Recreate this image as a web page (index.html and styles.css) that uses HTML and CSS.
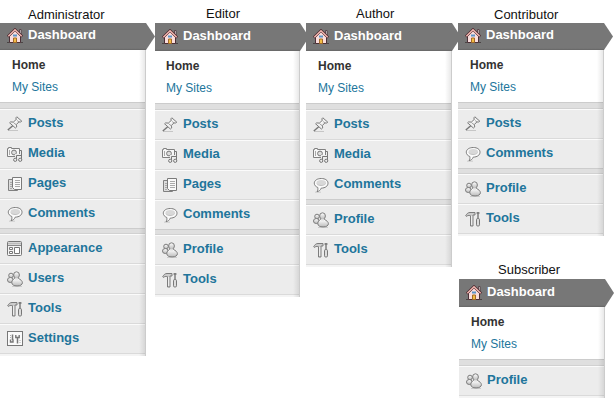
FILE: index.html
```html
<!DOCTYPE html>
<html lang="en">
<head>
<meta charset="utf-8">
<title>Admin menus by role</title>
<link rel="stylesheet" href="styles.css">
</head>
<body>
<svg class="defs" aria-hidden="true">
  <defs>
    <linearGradient id="metal" x1="0" y1="0" x2="0" y2="1"><stop offset="0" stop-color="#fff"/><stop offset="1" stop-color="#bbb"/></linearGradient>
    <symbol id="home" viewBox="0 0 16 16">
      <path d="M0 14.500h16" stroke="#4b4545"/>
      <path d="M2.500 8v6.500h11V8L8 3z" fill="#fbdedd" stroke="#4c3037"/>
      <path d="M12.500 1.500h1.500v5l-1.500-1.500z" fill="#eee" stroke="#4c3037" stroke-width=".8"/>
      <path d="M.8 8.500L8 1.500l7.200 7" fill="none" stroke="#4c2c32" stroke-width="2.600"/>
      <path d="M1.300 8.300L8 1.900l6.700 6.400" fill="none" stroke="#f0b4ae" stroke-width="1.500"/>
      <path d="M6 7.500h4" stroke="#5b95c8" stroke-width="2"/>
      <path d="M6.500 14.500v-4.500h3v4.500z" fill="#f2bd43" stroke="#a36a29"/>
    </symbol>
    <symbol id="posts" viewBox="0 0 16 16">
      <path d="M1 14.500h10" stroke="#c6c6c6"/>
      <path d="M.8 14L6 9.500" stroke="#777" stroke-width="1.500"/>
      <path d="M9.800 .8l5 4.400-1.500.9-1.400-.2-2.500 2.600.3 2.500-1.300 1L2.600 6.800l1-.9 2.700.2 2.900-2.600-.3-1.700z" fill="#f0f0f0" stroke="#7c7c7c"/>
      <path d="M6.500 6.500l3 2.500M9.300 3.700l2.700 2.300" stroke="#999"/>
      <path d="M7.500 6.500l3-2.500" stroke="#fff"/>
    </symbol>
    <symbol id="media" viewBox="0 0 16 16">
      <path d="M.5 2.500h1v-1h3v1h8v8H.5z" fill="#f7f7f7" stroke="#808080"/>
      <circle cx="7" cy="6.500" r="2.400" fill="#ddd" stroke="#777"/>
      <path d="M2.500 4v5" stroke="#aaa"/>
      <path d="M9.500 14V9.500h5V5" fill="none" stroke="#ececec" stroke-width="3"/>
      <path d="M9.500 14V9.500h5M12.500 4.500h2V14" fill="none" stroke="#777"/>
      <circle cx="8.200" cy="13.800" r="1.600" fill="#eee" stroke="#777"/><circle cx="13.200" cy="13.800" r="1.600" fill="#eee" stroke="#777"/>
    </symbol>
    <symbol id="pages" viewBox="0 0 16 16">
      <path d="M1.500 3.500h9v11h-9z" fill="#ddd" stroke="#808080"/>
      <path d="M3 6.500h2M3 8.500h2M3 10.500h2M3 12.500h2" stroke="#aaa"/>
      <path d="M5.500 1.500h9v12h-7l-2-2z" fill="#fafafa" stroke="#7a7a7a"/>
      <path d="M8 4.500h5M8 6.500h5M8 8.500h5M8 10.500h5" stroke="#aaa"/>
    </symbol>
    <symbol id="comments" viewBox="0 0 16 16">
      <path d="M2 15.200h6" stroke="#ccc"/>
      <path d="M8.300 1.500c4 0 6.700 1.900 6.700 4.700s-2.700 4.900-6.700 4.900c-.8 2-2.300 3.300-4.300 3.600.8-1 1.100-2.400.8-4.200C2.600 9.600 1.300 8.100 1.300 6.200c0-2.800 3-4.700 7-4.700z" fill="#fafafa" stroke="#7c7c7c"/>
      <path d="M3.500 6h9.500c-.3 2-2.500 3-5 3s-4.300-1-4.500-3z" fill="#c0c0c0"/>
      <ellipse cx="8.300" cy="5.500" rx="4.700" ry="2.500" fill="#d8d8d8"/>
    </symbol>
    <symbol id="appearance" viewBox="0 0 16 16">
      <rect x=".5" y=".5" width="14" height="14" rx="1" fill="#f4f4f4" stroke="#777"/>
      <path d="M1 2.500h13" stroke="#bbb" stroke-width="2"/><path d="M1 4.500h13" stroke="#888"/>
      <path d="M2.500 6.500h3v2h-3zM2.500 10.500h3v2h-3zM7.500 6.500h5v6h-5z" fill="#fff" stroke="#777"/>
    </symbol>
    <symbol id="users" viewBox="0 0 16 16">
      <path d="M5 15.500h10" stroke="#ccc"/>
      <g fill="url(#metal)" stroke="#7c7c7c">
        <circle cx="4" cy="4.500" r="2.300"/><ellipse cx="3.300" cy="9" rx="2.800" ry="2.500"/>
        <ellipse cx="9.500" cy="4" rx="2.900" ry="3.200"/><path d="M7.500 7.500h4c2 1 3.900 2.400 3.900 4.200 0 2-2 3.200-5.300 3.200s-5.300-1.200-5.300-3.200c0-1.800 1-3.200 2.700-4.200z"/>
      </g>
      <path d="M8 7.500h3" stroke="#ddd" stroke-width="2"/>
    </symbol>
    <symbol id="tools" viewBox="0 0 16 16">
      <path d="M.7 4.800C2 2.500 3 1.500 5 1.500h5v2.500H8v11H5.500V4.700c-2-.5-3-.2-4 .7z" fill="#ccc" stroke="#7c7c7c"/>
      <path d="M6.700 5v9" stroke="#f4f4f4"/>
      <path d="M13 1v7M11.500 2h3" stroke="#777" stroke-width="1.400"/>
      <rect x="11.500" y="7.500" width="3" height="7.500" rx="1.200" fill="#ddd" stroke="#777"/>
    </symbol>
    <symbol id="settings" viewBox="0 0 16 16">
      <rect x=".5" y=".5" width="15" height="14" fill="#fafafa" stroke="#777"/>
      <path d="M5.500 3.500V9M10.500 7v5.500" stroke="#777" stroke-width="1.500"/>
      <path d="M3.500 8.500V11h2.500V8.500M8.800 4v2.500h3.400V4" fill="none" stroke="#777" stroke-width="1.400"/>
      <path d="M3 4.500h1M3 6.500h1M12.500 9.500h1M12.500 11.500h1" stroke="#aaa"/>
    </symbol>
  </defs>
</svg>
<main class="board">
  <section class="role administrator">
    <h2>Administrator</h2>
    <div class="dash"><svg><use href="#home"/></svg>Dashboard</div>
    <div class="body">
      <div class="sub"><b>Home</b><a>My Sites</a></div>
      <ul><li><svg><use href="#posts"/></svg>Posts</li><li><svg><use href="#media"/></svg>Media</li><li><svg><use href="#pages"/></svg>Pages</li><li><svg><use href="#comments"/></svg>Comments</li></ul>
      <ul><li><svg><use href="#appearance"/></svg>Appearance</li><li><svg><use href="#users"/></svg>Users</li><li><svg><use href="#tools"/></svg>Tools</li><li><svg><use href="#settings"/></svg>Settings</li></ul>
    </div>
  </section>
  <section class="role editor tall">
    <h2>Editor</h2>
    <div class="dash"><svg><use href="#home"/></svg>Dashboard</div>
    <div class="body">
      <div class="sub"><b>Home</b><a>My Sites</a></div>
      <ul><li><svg><use href="#posts"/></svg>Posts</li><li><svg><use href="#media"/></svg>Media</li><li><svg><use href="#pages"/></svg>Pages</li><li><svg><use href="#comments"/></svg>Comments</li></ul>
      <ul><li><svg><use href="#users"/></svg>Profile</li><li><svg><use href="#tools"/></svg>Tools</li></ul>
    </div>
  </section>
  <section class="role author tall">
    <h2>Author</h2>
    <div class="dash"><svg><use href="#home"/></svg>Dashboard</div>
    <div class="body">
      <div class="sub"><b>Home</b><a>My Sites</a></div>
      <ul><li><svg><use href="#posts"/></svg>Posts</li><li><svg><use href="#media"/></svg>Media</li><li><svg><use href="#comments"/></svg>Comments</li></ul>
      <ul><li><svg><use href="#users"/></svg>Profile</li><li><svg><use href="#tools"/></svg>Tools</li></ul>
    </div>
  </section>
  <div class="stack">
    <section class="role contributor">
      <h2>Contributor</h2>
      <div class="dash"><svg><use href="#home"/></svg>Dashboard</div>
      <div class="body">
        <div class="sub"><b>Home</b><a>My Sites</a></div>
        <ul><li><svg><use href="#posts"/></svg>Posts</li><li><svg><use href="#comments"/></svg>Comments</li></ul>
        <ul><li><svg><use href="#users"/></svg>Profile</li><li><svg><use href="#tools"/></svg>Tools</li></ul>
      </div>
    </section>
    <section class="role subscriber tall">
      <h2>Subscriber</h2>
      <div class="dash"><svg><use href="#home"/></svg>Dashboard</div>
      <div class="body">
        <div class="sub"><b>Home</b><a>My Sites</a></div>
        <ul><li><svg><use href="#users"/></svg>Profile</li></ul>
      </div>
    </section>
  </div>
</main>
</body>
</html>
```
FILE: styles.css
```css
* { box-sizing: border-box; }
body { margin: 0; background: #fff; font: 13px/16px "Liberation Sans", Arial, sans-serif; overflow: hidden; }
.defs { position: absolute; width: 0; height: 0; }
.board { display: grid; grid-template-columns: 155px 151px 152px 156px; width: 614px; height: 402px; align-items: start; }
.role { width: 146px; }
.editor { width: 145px; }
h2 { margin: 0; height: 23px; padding-top: 7px; padding-left: 28px; font-size: 13px; line-height: 16px; font-weight: 400; color: #111; }
.editor h2 { padding-left: 51px; padding-top: 6px; }
.author h2 { padding-left: 50px; padding-top: 6px; }
.contributor h2 { padding-left: 36px; }
.subscriber h2 { padding-left: 39px; padding-top: 6px; }
.dash { position: relative; display: flex; align-items: flex-start; height: 27px; padding: 4px 0 0 7px; gap: 5px; background: linear-gradient(#777 0 94%, #6a6a6a 96%); color: #fff; font-weight: 700; }
.dash svg { margin-top: 1px; }
.dash::after { content: ""; position: absolute; left: 100%; top: 0; width: 9px; height: 100%; background: #777; clip-path: polygon(0 0, 100% 50%, 0 100%); }
.tall .dash { height: 28px; padding-top: 5px; }
svg { width: 16px; height: 16px; flex: none; display: block; }
.body { position: relative; border-right: 1px solid #ccc; background: #ececec; }
.body::after { content: ""; position: absolute; right: 0; top: 0; bottom: 0; width: 6px; background: linear-gradient(90deg, rgba(0,0,0,0), rgba(0,0,0,.09)); }
.sub { height: 52px; padding: 7px 0 0 12px; background: #fff; font-size: 12px; display: flex; flex-direction: column; gap: 6px; }
.editor .sub { padding-left: 11px; }
.sub b { color: #333; }
.sub a { color: #21759b; }
ul { list-style: none; margin: 0; padding: 0; border-top: 1px solid #ccc; }
ul::before { content: ""; display: block; height: 4px; background: #dfdfdf; border-bottom: 1px solid #d1d1d1; }
.sub + ul::before { height: 5px; }
ul + ul { margin-top: -1px; }
li { display: flex; align-items: flex-start; height: 30px; padding: 5px 0 0 7px; gap: 5px; border-top: 1px solid #fbfbfb; border-bottom: 1px solid #dadada; color: #21759b; font-weight: 700; }
li svg { margin-top: 1px; }
ul:last-child { border-bottom: 2px solid #f4f4f4; }
.stack { display: flex; flex-direction: column; }
.contributor { height: 256px; }
.subscriber { margin-left: 1px; }
```
